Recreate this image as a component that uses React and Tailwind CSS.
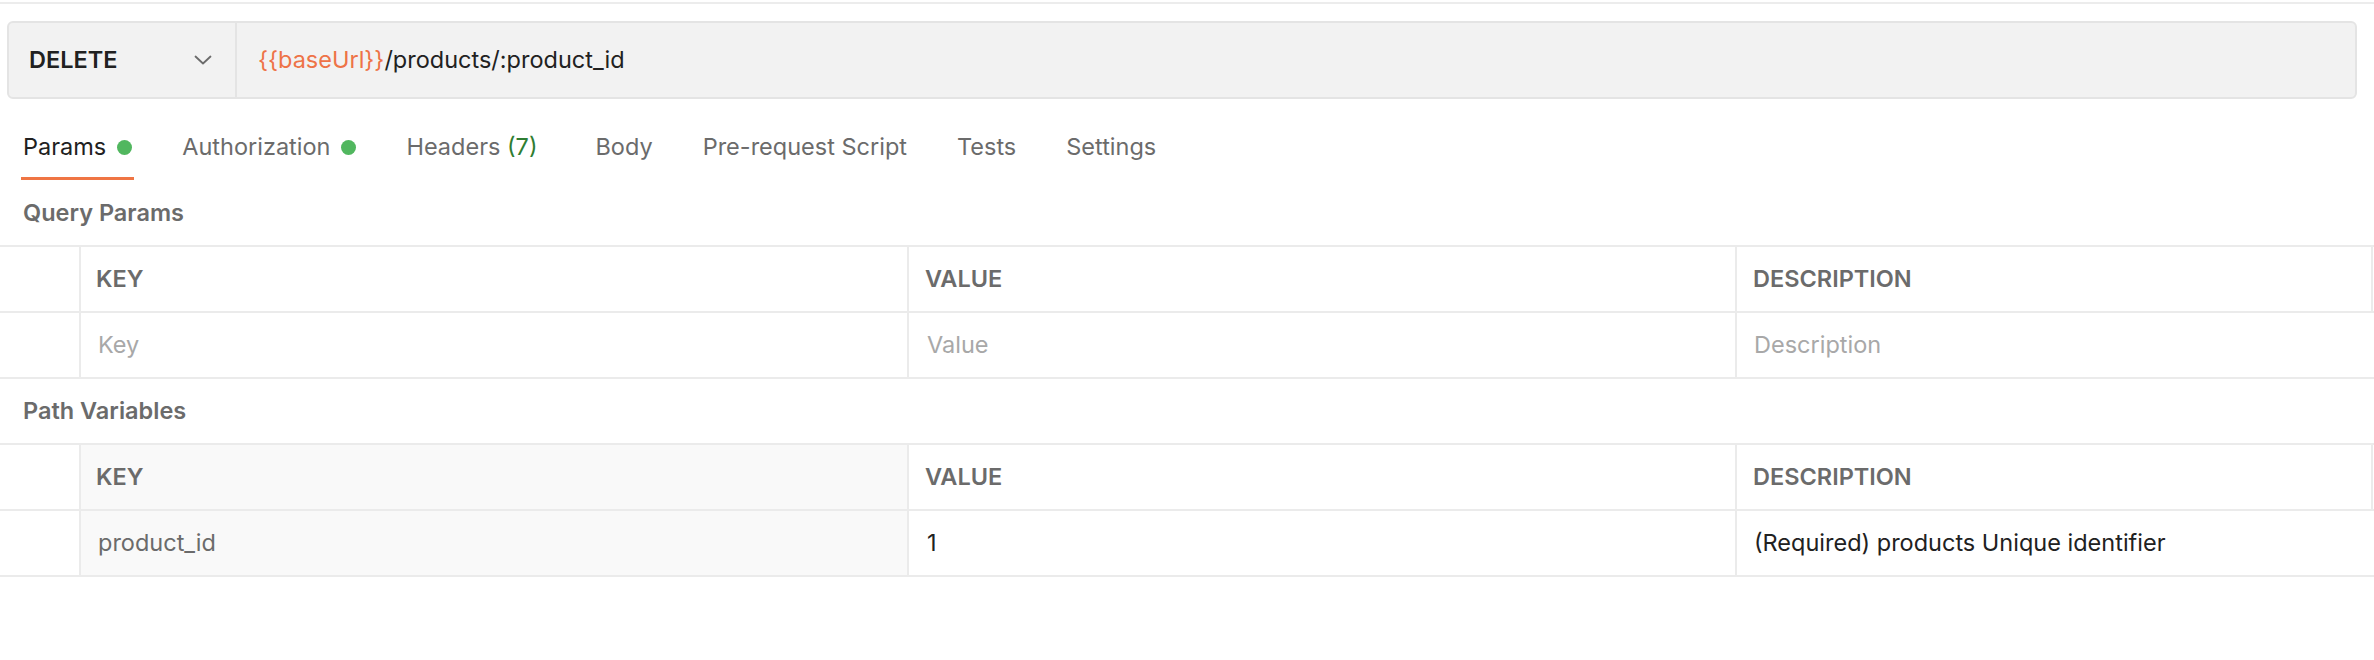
// App.jsx
import React from "react";

const tabs = [
  { label: "Params", dot: true, active: true },
  { label: "Authorization", dot: true },
  { label: "Headers", count: "(7)" },
  { label: "Body" },
  { label: "Pre-request Script" },
  { label: "Tests" },
  { label: "Settings" },
];

function Chevron() {
  return (
    <svg width="18" height="10" viewBox="0 0 18 10" fill="none">
      <path d="M1.5 1.5L9 8.5L16.5 1.5" stroke="#6b6b6b" strokeWidth="1.8" strokeLinecap="round" strokeLinejoin="round" />
    </svg>
  );
}

function ParamTable({ readonlyKey, row }) {
  const keyBg = readonlyKey ? "bg-[#f9f9f9]" : "bg-white";
  return (
    <div className="border-t-2 border-b-2 border-[#ebebeb]">
      {/* header */}
      <div className="grid grid-cols-[79px_828px_828px_638px] h-[66px] border-b-2 border-[#ebebeb]">
        <div />
        <div className={`flex items-center pl-[15px] border-l-2 border-[#ebebeb] font-semibold text-[#6b6b6b] ${keyBg}`}>KEY</div>
        <div className="flex items-center pl-[16px] border-l-2 border-[#ebebeb] font-semibold text-[#6b6b6b]">VALUE</div>
        <div className="flex items-center pl-[16px] border-l-2 border-r-2 border-[#ebebeb] font-semibold text-[#6b6b6b]">DESCRIPTION</div>
      </div>
      {/* body */}
      <div className="grid grid-cols-[79px_828px_828px_638px] h-[64px]">
        <div />
        <div className={`flex items-center pl-[17px] border-l-2 border-[#ebebeb] ${keyBg} ${row.keyClass}`}>{row.key}</div>
        <div className={`flex items-center pl-[18px] border-l-2 border-[#ebebeb] ${row.valueClass}`}>{row.value}</div>
        <div className={`flex items-center pl-[17px] border-l-2 border-[#ebebeb] ${row.descClass}`}>{row.desc}</div>
      </div>
    </div>
  );
}

export default function App() {
  return (
    <div className="w-[2374px] h-[660px] overflow-hidden bg-white font-['Inter',sans-serif] text-[23.5px] text-[#212121]">
      <div className="mt-[2px] h-[2px] bg-[#ececec]" />

      {/* request bar */}
      <div className="pl-[7px] pr-[17px] pt-[17px]">
        <div className="flex h-[78px] rounded-[6px] border-2 border-[#e4e4e4] bg-[#f2f2f2]">
          <div className="flex w-[228px] items-center justify-between border-r-2 border-[#e4e4e4] pl-[20px] pr-[23px]">
            <span className="font-semibold text-[#212121]">DELETE</span>
            <Chevron />
          </div>
          <div className="flex items-center pl-[21px]">
            <span className="text-[#ee7347]">{"{{baseUrl}}"}</span>
            <span className="text-[#212121]">/products/:product_id</span>
          </div>
        </div>
      </div>

      {/* tabs */}
      <div className="mt-[18px] flex gap-[46px] pl-[21px]">
        {tabs.map((t) => (
          <div
            key={t.label}
            className={`flex h-[63px] items-center gap-[11px] border-b-[3px] px-[2px] ${
              t.active ? "border-[#ef7544] text-[#212121]" : "border-transparent text-[#6b6b6b]"
            } ${t.count ? "mr-[8px]" : ""}`}
          >
            <span>
              {t.label}
              {t.count && <span className="text-[#2f7d32]"> {t.count}</span>}
            </span>
            {t.dot && <span className="h-[15px] w-[15px] rounded-full bg-[#51b75f]" />}
          </div>
        ))}
      </div>

      <div className="flex h-[65px] items-center pl-[23px] font-semibold text-[#6b6b6b]">Query Params</div>
      <ParamTable
        row={{
          key: "Key",
          value: "Value",
          desc: "Description",
          keyClass: "text-[#a8a8a8]",
          valueClass: "text-[#a8a8a8]",
          descClass: "text-[#a8a8a8]",
        }}
      />

      <div className="flex h-[64px] items-center pl-[23px] font-semibold text-[#6b6b6b]">Path Variables</div>
      <ParamTable
        readonlyKey
        row={{
          key: "product_id",
          value: "1",
          desc: "(Required) products Unique identifier",
          keyClass: "text-[#6b6b6b]",
          valueClass: "text-[#212121]",
          descClass: "text-[#212121]",
        }}
      />
    </div>
  );
}
